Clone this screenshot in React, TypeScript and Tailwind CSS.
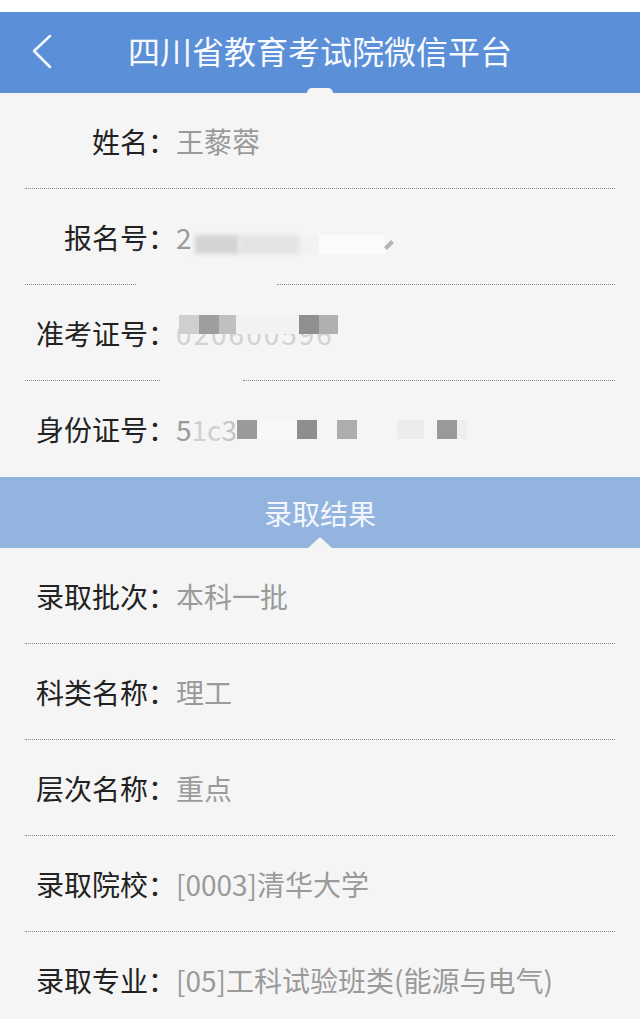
import React from 'react';

type Field = { label: string; value: React.ReactNode };

const Divider = ({ gap }: { gap?: [number, number] }) => {
  if (!gap) {
    return <div className="mx-[25px] h-px border-b border-dotted border-[#8c8c8c]" />;
  }
  return (
    <div className="mx-[25px] flex h-px">
      <div className="border-b border-dotted border-[#8c8c8c]" style={{ width: gap[0] }} />
      <div style={{ width: gap[1] - gap[0] }} />
      <div className="flex-1 border-b border-dotted border-[#8c8c8c]" />
    </div>
  );
};

const Row = ({ label, value, tall }: Field & { tall?: boolean }) => (
  <div className={`flex items-center pl-[36px] ${tall ? 'h-[96px]' : 'h-[95px]'}`}>
    <span className="w-[140px] shrink-0 text-right text-[#222] leading-none">{label}</span>
    <span className="text-[#9a9a9a] leading-none">{value}</span>
  </div>
);

// mosaic squares left over from the blurred personal data
const Blot = ({ w, c, blur }: { w: number; c: string; blur?: boolean }) => (
  <span className={`inline-block h-[19px] ${c} ${blur ? 'blur-[2px]' : ''}`} style={{ width: w }} />
);

const RegNo = () => (
  <span className="flex items-center">
    <span>2</span>
    <span className="ml-[3px] mt-[16px] flex items-center">
      <Blot w={44} c="bg-[#d4d4d4]" blur />
      <Blot w={60} c="bg-[#e4e4e4]" blur />
      <Blot w={20} c="bg-[#f2f2f2]" />
      <Blot w={66} c="bg-[#fbfbfb]" />
      <span className="ml-[2px] h-[10px] w-[4px] rotate-45 bg-[#b5b5b5]" />
    </span>
  </span>
);

const ExamNo = () => (
  <span className="relative inline-block text-[#d2d2d2] tracking-[2px]">
    020600596
    <span className="absolute left-[3px] top-[-4px] flex h-[20px]">
      <Blot w={20} c="bg-[#cfcfcf]" />
      <Blot w={20} c="bg-[#9e9e9e]" />
      <Blot w={17} c="bg-[#c0c0c0]" />
      <Blot w={63} c="bg-[#f2f2f2]" />
      <Blot w={20} c="bg-[#8f8f8f]" />
      <Blot w={19} c="bg-[#b0b0b0]" />
    </span>
  </span>
);

const IdNo = () => (
  <span className="flex items-center">
    <span>5</span>
    <span className="text-[#cfcfcf]">1c</span>
    <span className="text-[#c4c4c4]">3</span>
    <span className="flex items-center gap-0">
      <Blot w={20} c="bg-[#9a9a9a]" />
      <Blot w={40} c="bg-[#f8f8f8]" />
      <Blot w={20} c="bg-[#8e8e8e]" />
      <Blot w={20} c="bg-[#f5f5f5]" />
      <Blot w={20} c="bg-[#adadad]" />
      <Blot w={40} c="bg-[#f5f5f5]" />
      <Blot w={27} c="bg-[#ececec]" />
      <Blot w={13} c="bg-[#f5f5f5]" />
      <Blot w={20} c="bg-[#999]" />
      <Blot w={10} c="bg-[#eeeeee]" />
    </span>
  </span>
);

const result: Field[] = [
  { label: '录取批次：', value: '本科一批' },
  { label: '科类名称：', value: '理工' },
  { label: '层次名称：', value: '重点' },
  { label: '录取院校：', value: '[0003]清华大学' },
  { label: '录取专业：', value: '[05]工科试验班类(能源与电气)' },
];

export default function App() {
  return (
    <div className="h-[1019px] w-[640px] overflow-hidden bg-[#f5f5f5] font-['Noto_Sans_CJK_SC',sans-serif] text-[28px]">
      <div className="h-[12px] bg-white" />
      <header className="relative flex h-[81px] items-center justify-center bg-[#5b8fd8]">
        <svg className="absolute left-[28px] top-[20px]" width="28" height="40" viewBox="0 0 28 40" fill="none">
          <polyline points="22,4 6,19 22,35" stroke="#f4f8ff" strokeWidth="2.5" strokeLinecap="round" strokeLinejoin="round" />
        </svg>
        <h1 className="pb-[6px] text-[32px] leading-none text-[#f7faff]">四川省教育考试院微信平台</h1>
        <div className="absolute bottom-0 left-1/2 h-[5px] w-[26px] -translate-x-1/2 rounded-t-full bg-[#f5f5f5]" />
      </header>

      <section>
        <Row label="姓名：" value="王藜蓉" />
        <Divider />
        <Row label="报名号：" value={<RegNo />} />
        <Divider gap={[111, 252]} />
        <Row label="准考证号：" value={<ExamNo />} />
        <Divider gap={[135, 218]} />
        <Row label="身份证号：" value={<IdNo />} tall />
      </section>

      <div className="relative flex h-[71px] items-center justify-center bg-[#94b4e0]">
        <span className="leading-none text-[#f3f7fd]">录取结果</span>
        <div className="absolute bottom-0 left-1/2 h-0 w-0 -translate-x-1/2 border-x-[12px] border-b-[11px] border-x-transparent border-b-[#f5f5f5]" />
      </div>

      <section>
        {result.map((f, i) => (
          <React.Fragment key={i}>
            <Row label={f.label} value={f.value} />
            {i < result.length - 1 && <Divider />}
          </React.Fragment>
        ))}
      </section>
    </div>
  );
}
